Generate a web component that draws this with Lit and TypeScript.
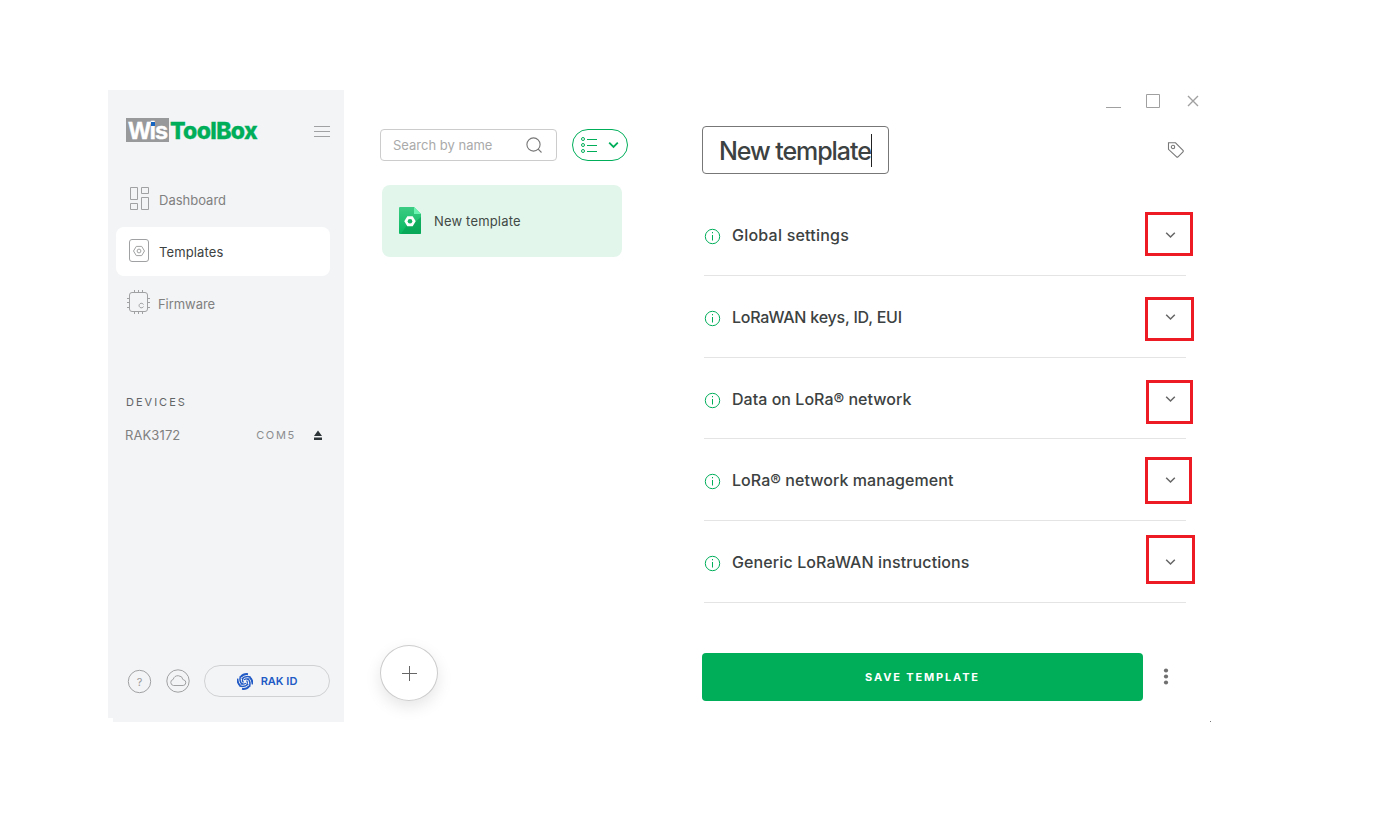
import { LitElement, html, svg, css } from "lit";
import { customElement } from "lit/decorators.js";
import { styleMap } from "lit/directives/style-map.js";

const chevron = (cls: string) => html`<svg class=${cls} width="12" height="8" viewBox="0 0 12 8"><path d="M1.2 1.7 5.5 6 9.8 1.7" fill="none" stroke="currentColor"/></svg>`;

@customElement("side-bar")
class SideBar extends LitElement {
  static styles = css`
    :host { display: flex; flex-direction: column; width: 236px; height: 632px; background: #f3f4f6; box-sizing: border-box; color: #808080; clip-path: polygon(0 0, 100% 0, 100% 100%, 5px 100%, 5px 628px, 0 628px); }
    .head { height: 85px; display: flex; align-items: flex-start; padding: 28px 14px 0 18px; box-sizing: border-box; }
    .wis { position: relative; width: 43px; height: 24px; background: #98999b; color: #fff; padding-left: 2.5px; box-sizing: border-box; font: bold 23.5px/26px "Liberation Sans", Arial, sans-serif; letter-spacing: -1px; -webkit-text-stroke: .5px #fff; }
    .dot { position: absolute; left: 25px; top: 4px; width: 4px; height: 4px; background: #1665c1; }
    .tool { margin-left: 1px; color: #00ae5a; font: 800 23px/26px Inter, sans-serif; letter-spacing: -.65px; flex: 1; -webkit-text-stroke: .3px #00ae5a; }
    .burger { margin-top: 8px; }
    nav { display: flex; flex-direction: column; gap: 3px; padding: 0 14px 0 8px; }
    .item { display: flex; align-items: center; height: 49px; gap: 8px; padding-left: 11px; border-radius: 8px; font: 13px/20px Inter, sans-serif; }
    .item svg { overflow: visible; fill: none; stroke: #a0a1a2; }
    .active { background: #fff; color: #3c4141; letter-spacing: .12px; }
    .fw { margin-left: -1px; letter-spacing: -.05px; }
    .devices { padding: 66px 22px 0 18px; flex: 1; }
    h2 { margin: 0 0 15px; font: 400 11px/16px Inter, sans-serif; letter-spacing: 2px; color: #626566; }
    .device { display: flex; align-items: center; margin-left: -1px; height: 20px; }
    .name { font: 13px/20px Inter, sans-serif; letter-spacing: .1px; flex: 1; }
    .port { font: 11px/20px Inter, sans-serif; letter-spacing: 1.7px; color: #8b8d8f; }
    .eject { margin-left: 18px; }
    .foot { display: flex; align-items: center; padding: 0 14px 25px 19px; }
    .foot > svg { fill: none; stroke: #a0a1a2; }
    .q { font: 11px Inter, sans-serif; fill: #999; stroke: none; }
    .cloud { margin-left: 14px; }
    .pill { margin-left: 13px; width: 126px; height: 32px; box-sizing: border-box; border: 1px solid #cfd1d3; border-radius: 16px; display: flex; align-items: center; justify-content: center; gap: 8px; color: #2159c5; font: 600 11px/16px Inter, sans-serif; }
  `;
  render() {
    return html`
      <div class="head">
        <div class="wis">Wis<i class="dot"></i></div><div class="tool">ToolBox</div>
        <svg class="burger" width="16" height="11"><path d="M0 .5h16M0 5.5h16M0 10.5h16" stroke="#a0a1a2"/></svg>
      </div>
      <nav>
        <div class="item"><svg width="24" height="25"><path d="M3.5 .5h7v12h-7zM14.5 .5h7v6h-7zM3.5 16.5h7v6h-7zM14.5 10.5h7v12h-7z"/></svg><span>Dashboard</span></div>
        <div class="item active"><svg width="24" height="25"><rect x="2.5" y=".5" width="19" height="22" rx="2.5"/><path d="M9.3 7.4h5.4l2.8 4.6-2.8 4.6H9.3L6.5 12z"/><circle cx="12" cy="12" r="1.9"/></svg><span>Templates</span></div>
        <div class="item"><svg width="24" height="25"><rect x="2.5" y="1.5" width="18" height="19" rx="2.5"/><path d="M7.5-1v2.5M11.5-1v2.5M15.5-1v2.5M7.5 20.5V23M11.5 20.5V23M15.5 20.5V23M0 7.5h2.5M0 11.5h2.5M0 16.5h2.5M20.5 7.5H23M20.5 11.5H23M20.5 16.5H23"/><path d="M16.5 13.6a2.3 2.3 0 1 0 0 1.9"/></svg><span class="fw">Firmware</span></div>
      </nav>
      <div class="devices">
        <h2>DEVICES</h2>
        <div class="device"><span class="name">RAK3172</span><span class="port">COM5</span>
          <svg class="eject" width="8" height="10"><path d="M4 .5 8 6H0zM0 7.5h8V10H0z" fill="#2e3538"/></svg></div>
      </div>
      <div class="foot">
        <svg width="25" height="25"><circle cx="12.5" cy="12.5" r="11.2"/><text class="q" x="12.5" y="16.5" text-anchor="middle">?</text></svg>
        <svg class="cloud" width="25" height="25"><circle cx="12" cy="12" r="11.2"/><path d="M7.5 16.5h9.7a2.9 2.9 0 0 0 .4-5.7h-.5a5.1 5.1 0 0 0-9.9-.4 3.1 3.1 0 0 0 .3 6.1z"/></svg>
        <div class="pill">
          <svg width="16" height="17" viewBox="-8 -8.5 16 17" fill="none" stroke="#2159c5">
            ${[0, 90, 180, 270].map(a => svg`<g transform="rotate(${a})"><path d="M-4.2-4.6Q-1.5-8 3-7.4" stroke-width="1.9"/><path d="M-3.2-2.6Q0-6 5.4-4.6" stroke-width="1.5"/><path d="M-1-1.6Q1-3.3 3.2-2" stroke-width="1.2"/></g>`)}
          </svg><span>RAK ID</span>
        </div>
      </div>`;
  }
}

@customElement("template-list")
class TemplateList extends LitElement {
  static styles = css`
    :host { display: flex; flex-direction: column; width: 358px; height: 632px; box-sizing: border-box; padding: 39px 0 21px 36px; font: 13px/20px Inter, sans-serif; }
    .bar { display: flex; gap: 15px; }
    .search { box-sizing: border-box; width: 177px; height: 32px; border: 1px solid #ccc; border-radius: 4px; padding: 0 13px 0 12px; display: flex; align-items: center; justify-content: space-between; color: #aaa; }
    .view { box-sizing: border-box; width: 56px; height: 32px; border: 1px solid #00ae5a; border-radius: 16px; display: flex; align-items: center; padding: 0 7px 0 8px; justify-content: space-between; color: #00ae5a; }
    .view svg { fill: none; stroke: #00ae5a; }
    .thick { stroke-width: 1.8; }
    .card { margin: 24px 0 0 2px; width: 240px; height: 72px; border-radius: 8px; background: #e3f6eb; display: flex; align-items: center; padding: 0 0 1px 17px; box-sizing: border-box; gap: 13px; color: #414a46; letter-spacing: .17px; flex: none; }
    .grow { flex: 1; }
    .add { box-sizing: border-box; width: 58px; height: 56px; border-radius: 50%; border: 1px solid #ccc; display: flex; align-items: center; justify-content: center; background: #fff; box-shadow: 0 6px 16px rgba(0,0,0,.1); }
  `;
  render() {
    return html`
      <div class="bar">
        <div class="search"><span>Search by name</span><svg width="17" height="17"><g fill="none" stroke="#777" stroke-width="1.1"><circle cx="7.5" cy="7.5" r="6.6"/><path d="m12.200 12.200 3.300 3.300"/></g></svg></div>
        <div class="view"><svg width="17" height="16"><circle cx="2" cy="2" r="1.5"/><circle cx="2" cy="8" r="1.5"/><circle cx="2" cy="14" r="1.5"/><path d="M6 2.5h10M6 8.5h10M6 14.5h10"/></svg>${chevron("thick")}</div>
      </div>
      <div class="card">
        <svg width="22" height="27"><defs><linearGradient id="g" x2="0" y2="1"><stop stop-color="#3ccc83"/><stop offset="1" stop-color="#07b860"/></linearGradient></defs>
          <path d="M1 0h14l7 7v19a1 1 0 0 1-1 1H1a1 1 0 0 1-1-1V1a1 1 0 0 1 1-1z" fill="url(#g)"/><path d="M22 10v16a1 1 0 0 1-1 1H2L8 18l7-2z" fill="#079f53" opacity=".6"/><path d="M15 0l7 7h-7z" fill="#69f5b0"/><path d="M8.3 9.3h5.4l3 5-3 5H8.3l-3-5z" fill="#fff"/><circle cx="11" cy="14.3" r="2.3" fill="#13b464"/></svg>
        <span>New template</span>
      </div>
      <div class="grow"></div>
      <div class="add"><svg width="15" height="15"><path d="M7.5 0v15M0 7.5h15" stroke="#666"/></svg></div>`;
  }
}

const sections = [
  { title: "Global settings", spacing: 0.22 },
  { title: "LoRaWAN keys, ID, EUI", spacing: -0.22 },
  { title: "Data on LoRa® network", spacing: 0.03 },
  { title: "LoRa® network management", spacing: 0.06 },
  { title: "Generic LoRaWAN instructions", spacing: 0.11 },
];

@customElement("template-detail")
class TemplateDetail extends LitElement {
  static styles = css`
    :host { display: block; width: 509px; height: 632px; box-sizing: border-box; color: #3c4141; font-family: Inter, sans-serif; }
    .controls { height: 36px; display: flex; justify-content: flex-end; padding: 4px 11px 0 0; box-sizing: border-box; }
    .top { display: flex; justify-content: space-between; height: 68px; padding-right: 26px; }
    .title { box-sizing: border-box; width: 187px; height: 48px; border: 1px solid #777; border-radius: 4px; padding-left: 16px; display: flex; align-items: center; font: 500 25px/30px Inter, sans-serif; letter-spacing: -1.07px; white-space: nowrap; }
    .title span { padding-top: 2px; }
    .caret { width: 1px; height: 33px; background: #222; }
    .tag { margin-top: 15px; }
    .row { display: grid; grid-template-columns: 17px 1fr 12px; column-gap: 11px; align-items: center; width: 482px; margin-left: 2px; box-sizing: border-box; height: 81.75px; border-bottom: 1px solid #e4e4e4; font: 500 16px/22px Inter, sans-serif; padding: 1.4px 9px 0 0; }
    .chev { color: #666; stroke-width: 1.5; }
    .info { margin-top: 3px; }
    .actions { display: flex; align-items: center; margin-top: 50px; }
    .save { width: 441px; height: 48px; border-radius: 4px; background: #00ae5a; color: #fff; display: flex; align-items: center; justify-content: center; font: 700 11px/16px Inter, sans-serif; letter-spacing: 1.85px; }
    .dots { margin: -1px 0 0 20px; }
    .corner { width: 1px; height: 1px; background: #777; margin: 20px 0 0 508px; }
  `;
  render() {
    return html`
      <div class="controls"><svg width="94" height="16" fill="none" stroke="#a0a0a0"><path d="M0 13.5h15"/><path d="M40.5 .5h13v13h-13z"/><path d="m82 2 10 10M92 2 82 12" stroke-width="1.4"/></svg></div>
      <div class="top">
        <div class="title"><span>New template</span><i class="caret"></i></div>
        <svg class="tag" width="18" height="18" fill="none" stroke="#777" stroke-width="1.1"><path d="M1.5 1.8h7l7.5 7.6q.7.7 0 1.4l-5 5q-.7.7-1.4 0L1.5 8.3z"/><circle cx="6" cy="6" r="1.7"/></svg>
      </div>
      ${sections.map(s => html`<div class="row"><svg class="info" width="17" height="17" fill="none" stroke="#00ae5a"><circle cx="8.5" cy="8.5" r="7.2"/><path d="M8.5 7v5.5M8.5 4v1.3"/></svg><span style=${styleMap({ letterSpacing: `${s.spacing}px` })}>${s.title}</span>${chevron("chev")}</div>`)}
      <div class="actions"><div class="save">SAVE TEMPLATE</div><svg class="dots" width="6" height="17" fill="#707070"><circle cx="3" cy="2.5" r="2.1"/><circle cx="3" cy="8.5" r="2.1"/><circle cx="3" cy="14.5" r="2.1"/></svg></div>
      <div class="corner"></div>`;
  }
}

@customElement("app-root")
class AppRoot extends LitElement {
  static styles = css`
    :host { display: block; position: relative; width: 1383px; height: 813px; box-sizing: border-box; padding: 90px 0 0 108px; background: #fff; overflow: hidden; }
    .window { display: flex; width: 1103px; }
    .mark { position: absolute; box-sizing: border-box; border: 3px solid #ed1c24; }
    .b1 { left: 1145px; top: 212px; width: 48px; height: 44px; }
    .b2 { left: 1145px; top: 297px; width: 49px; height: 44px; }
    .b3 { left: 1146px; top: 380px; width: 47px; height: 44px; }
    .b4 { left: 1145px; top: 457px; width: 47px; height: 47px; }
    .b5 { left: 1146px; top: 535px; width: 49px; height: 49px; }
  `;
  render() {
    return html`
      <div class="window"><side-bar></side-bar><template-list></template-list><template-detail></template-detail></div>
      ${[1, 2, 3, 4, 5].map(i => html`<div class="mark b${i}"></div>`)}`;
  }
}
